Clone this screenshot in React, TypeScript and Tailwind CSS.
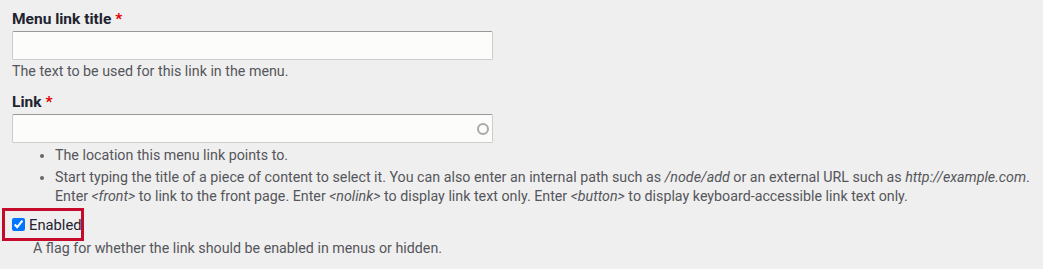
import React from "react";

export default function App() {
  const font = { fontFamily: "Roboto, 'Liberation Sans', sans-serif" };
  return (
    <div className="min-h-[269px] w-[1043px] bg-[#efefef] pl-[12px] pt-[9px] text-[#222330]" style={font}>
      <div>
        <label className="block text-[15.5px] font-bold leading-[20px]">
          Menu link title<span className="ml-[4px] text-[#e00000]">*</span>
        </label>
        <input
          type="text"
          className="mt-[2px] block h-[29px] w-[481px] rounded-[2px] border border-[#ccc] border-t-[#999] bg-[#fcfcfa] outline-none"
        />
        <div className="mt-[2px] text-[14.25px] leading-[18px] text-[#55565b]">
          The text to be used for this link in the menu.
        </div>
      </div>
      <div className="mt-[12px]">
        <label className="block text-[15.5px] font-bold leading-[20px]">
          Link<span className="ml-[4px] text-[#e00000]">*</span>
        </label>
        <div className="relative mt-[2px] h-[29px] w-[481px]">
          <input
            type="text"
            className="block h-[29px] w-[481px] rounded-[2px] border border-[#ccc] border-t-[#999] bg-[#fcfcfa] outline-none"
          />
          <svg className="absolute right-[3px] top-[8px]" width="14" height="14" viewBox="0 0 14 14">
            <circle cx="7" cy="7" r="5" fill="none" stroke="#a9a9a9" strokeWidth="2" />
          </svg>
        </div>
        <ul className="mt-[3px] list-disc pl-[43px] pr-[4px] text-[14.25px] leading-[19px] text-[#55565b] marker:text-[#666]">
          <li>The location this menu link points to.</li>
          <li className="mt-[3px]">
            Start typing the title of a piece of content to select it. You can also enter an internal path such as{" "}
            <em>/node/add</em> or an external URL such as <em>http://example.com</em>. Enter <em>&lt;front&gt;</em> to
            link to the front page. Enter <em>&lt;nolink&gt;</em> to display link text only. Enter{" "}
            <em>&lt;button&gt;</em> to display keyboard-accessible link text only.
          </li>
        </ul>
      </div>
      <div className="ml-[-10px] mt-[2px] flex h-[33px] w-[82px] items-center border-[3px] border-[#c60a2b] pl-[7px]">
        <input type="checkbox" defaultChecked className="m-0 h-[13px] w-[13px] shrink-0" />
        <span className="ml-[4px] whitespace-nowrap text-[14.75px] leading-[20px] text-[#222330]">Enabled</span>
      </div>
      <div className="ml-[21px] mt-[-2px] text-[14.25px] leading-[18px] text-[#55565b]">
        A flag for whether the link should be enabled in menus or hidden.
      </div>
    </div>
  );
}
